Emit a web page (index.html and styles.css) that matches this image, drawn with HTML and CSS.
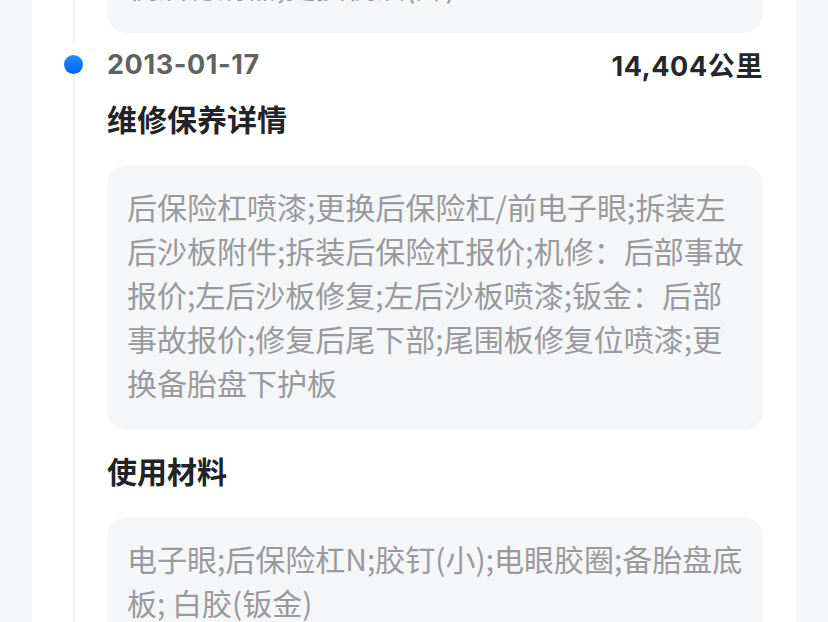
FILE: index.html
```html
<!DOCTYPE html>
<html lang="zh-CN">

<head>
    <meta charset="UTF-8">
    <meta name="viewport" content="width=device-width, initial-scale=1.0">
    <title>维修保养记录</title>
    <link rel="stylesheet" href="styles.css">
</head>

<body>
    <div class="card">
        <!-- previous record, scrolled mostly out of view -->
        <div class="item item-prev">
            <div class="axis">
                <div class="axis-line"></div>
            </div>
            <div class="item-body">
                <div class="detail-box">机油滤清器;更换机油(升)</div>
            </div>
        </div>

        <div class="item">
            <div class="axis">
                <span class="dot"></span>
                <div class="axis-line"></div>
            </div>
            <div class="item-body">
                <div class="item-head">
                    <span class="date">2013-01-17</span>
                    <span class="mileage">14,404公里</span>
                </div>
                <h3 class="section-title">维修保养详情</h3>
                <div class="detail-box">后保险杠喷漆;更换后保险杠/前电子眼;拆装左后沙板附件;拆装后保险杠报价;机修：后部事故报价;左后沙板修复;左后沙板喷漆;钣金：后部事故报价;修复后尾下部;尾围板修复位喷漆;更换备胎盘下护板</div>
                <h3 class="section-title">使用材料</h3>
                <div class="detail-box">电子眼;后保险杠N;胶钉(小);电眼胶圈;备胎盘底板; 白胶(钣金)</div>
            </div>
        </div>
    </div>
</body>

</html>
```

FILE: styles.css
```css
body {
    margin: 0;
    padding: 0;
    background-color: #f5f6f8;
    font-family: "Noto Sans CJK SC", "Inter", sans-serif;
    overflow: hidden;
}

.card {
    margin: -56px 32px 0 32px;
    padding: 0 33px 40px 31px;
    background: #fff;
    min-height: 800px;
}

.item {
    display: grid;
    grid-template-columns: 21px 1fr;
    column-gap: 23px;
}

.item-prev .item-body {
    padding-bottom: 10px;
}

.axis {
    display: flex;
    flex-direction: column;
    align-items: center;
}

.dot {
    width: 19px;
    height: 19px;
    margin-top: 12px;
    border-radius: 50%;
    background: linear-gradient(180deg, #1f90ff, #0060ff);
    flex-shrink: 0;
}

.axis-line {
    flex: 1;
    width: 2px;
    background: #f1f2f4;
}

.item-head {
    display: flex;
    justify-content: space-between;
    align-items: center;
    height: 43px;
    font-family: "Inter", "Noto Sans CJK SC", sans-serif;
    font-weight: 700;
    font-size: 27px;
    letter-spacing: 0.6px;
}

.date {
    color: #626262;
}

.mileage {
    color: #24262b;
}

.section-title {
    margin: 10px 0 25px 0;
    font-size: 30px;
    line-height: 44px;
    font-weight: 600;
    color: #222327;
}

.section-title + .detail-box + .section-title {
    margin-top: 18px;
}

.detail-box {
    background: #f5f6f8;
    border-radius: 20px;
    padding: 19px 18px 26px 20px;
    font-size: 30px;
    line-height: 44px;
    color: #9a9a9c;
    word-break: break-all;
}
```
